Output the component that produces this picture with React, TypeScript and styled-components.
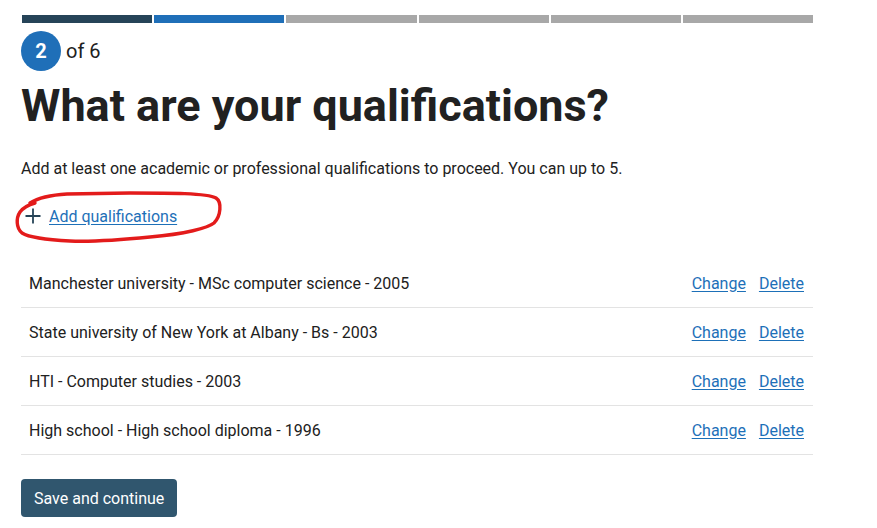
import React from "react";
import styled, { createGlobalStyle } from "styled-components";

const Global = createGlobalStyle`
  html, body { margin: 0; padding: 0; background: #fff; }
  body { font-family: Roboto, "Noto Sans", Arial, sans-serif; color: #212121; }
  * { box-sizing: border-box; }
`;

const Page = styled.main`
  width: 792px;
  margin-left: 21px;
  padding-top: 15px;
`;

const Progress = styled.div`
  display: grid;
  grid-template-columns: repeat(6, 1fr);
  gap: 2px;
  width: 791px;
  margin-left: 1px;
`;

const Segment = styled.div<{ $state: "done" | "current" | "todo" }>`
  height: 8px;
  background: ${(p) =>
    p.$state === "done" ? "#264458" : p.$state === "current" ? "#1f6fb8" : "#a8a8a8"};
`;

const StepRow = styled.div`
  display: flex;
  align-items: center;
  gap: 5px;
  margin-top: 8px;
`;

const StepBadge = styled.div`
  width: 40px;
  height: 40px;
  border-radius: 50%;
  background: #1f6fb8;
  color: #fff;
  font-weight: 700;
  font-size: 20px;
  display: flex;
  align-items: center;
  justify-content: center;
`;

const StepText = styled.span`
  font-size: 20px;
  color: #212121;
`;

const Title = styled.h1`
  margin: 9px 0 0 0;
  font-size: 45px;
  line-height: 52px;
  font-weight: 700;
  color: #212121;
  white-space: nowrap;
`;

const Lead = styled.p`
  margin: 25px 0 0 0;
  font-size: 16px;
  line-height: 24px;
  color: #212121;
`;

const AddRow = styled.div`
  position: relative;
  display: flex;
  align-items: center;
  gap: 8px;
  margin-top: 23px;
  margin-left: 4px;
  height: 24px;
`;

const Link = styled.a`
  color: #1d70b8;
  text-decoration: underline;
  text-underline-offset: 2px;
  font-size: 16px;
  cursor: pointer;
`;

const Circle = styled.svg`
  position: absolute;
  left: -15px;
  top: -16px;
  pointer-events: none;
  overflow: visible;
`;

const List = styled.div`
  margin-top: 31px;
  width: 792px;
`;

const Row = styled.div`
  display: flex;
  align-items: center;
  justify-content: space-between;
  height: 49px;
  padding: 0 9px 0 8px;
  border-bottom: 1px solid #e3e3e3;
  font-size: 16px;
`;

const Actions = styled.div`
  display: flex;
  gap: 13px;
`;

const Button = styled.button`
  margin-top: 24px;
  height: 38px;
  padding: 0 13px;
  border: none;
  border-radius: 4px;
  background: #30566e;
  color: #fff;
  font-family: Roboto, Arial, sans-serif;
  font-size: 16px;
  cursor: pointer;
`;

const Plus = () => (
  <svg width="16" height="16" viewBox="0 0 16 16">
    <path d="M8 0.5V15.5M0.5 8H15.5" stroke="#264458" strokeWidth="1.8" fill="none" />
  </svg>
);

const rows = [
  "Manchester university - MSc computer science - 2005",
  "State university of New York at Albany - Bs - 2003",
  "HTI - Computer studies - 2003",
  "High school - High school diploma - 1996",
];

const steps: ("done" | "current" | "todo")[] = ["done", "current", "todo", "todo", "todo", "todo"];

export default function App() {
  return (
    <>
      <Global />
      <Page>
        <Progress>
          {steps.map((s, i) => (
            <Segment key={i} $state={s} />
          ))}
        </Progress>
        <StepRow>
          <StepBadge>2</StepBadge>
          <StepText>of 6</StepText>
        </StepRow>
        <Title>What are your qualifications?</Title>
        <Lead>Add at least one academic or professional qualifications to proceed. You can up to 5.</Lead>
        <AddRow>
          <Plus />
          <Link>Add qualifications</Link>
          <Circle width="215" height="58" viewBox="0 0 215 58">
            <path
              d="M20 15 C28 10, 40 7, 57 6 L120 5 C160 5, 197 5, 206 10 C212 14, 211 28, 204 35 C198 40, 175 46, 140 49 C110 52, 85 54, 60 53 C40 52, 20 50, 12 45 C6 40, 6 30, 10 24 C13 20, 18 17, 25 15"
              stroke="#e31b1b"
              strokeWidth="3.4"
              fill="none"
              strokeLinecap="round"
              strokeLinejoin="round"
            />
          </Circle>
        </AddRow>
        <List>
          {rows.map((r) => (
            <Row key={r}>
              <span>{r}</span>
              <Actions>
                <Link>Change</Link>
                <Link>Delete</Link>
              </Actions>
            </Row>
          ))}
        </List>
        <Button>Save and continue</Button>
      </Page>
    </>
  );
}
